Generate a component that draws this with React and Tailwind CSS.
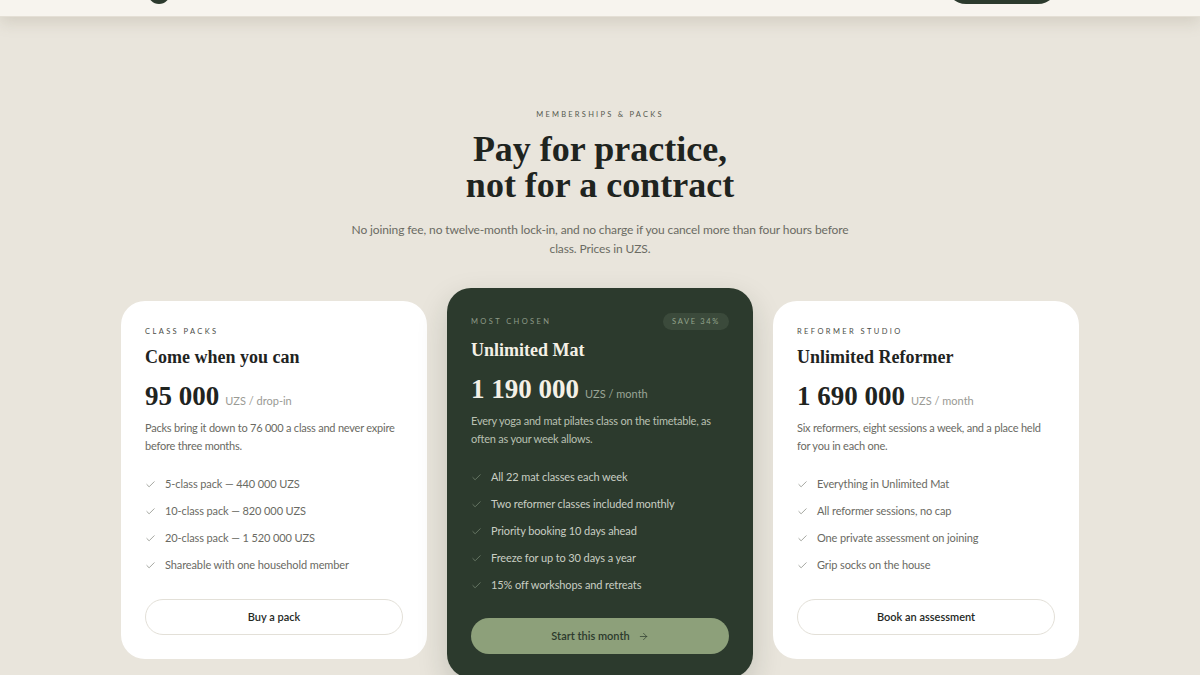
import { Check, ArrowRight } from 'lucide-react';

const sans = "font-['Lato','Open_Sans',sans-serif]";
const serif = "font-['Liberation_Serif','DejaVu_Serif',serif]";

const plans = [
  {
    label: 'Class packs',
    title: 'Come when you can',
    price: '95 000',
    unit: 'UZS / drop-in',
    desc: 'Packs bring it down to 76 000 a class and never expire before three months.',
    items: ['5-class pack — 440 000 UZS', '10-class pack — 820 000 UZS', '20-class pack — 1 520 000 UZS', 'Shareable with one household member'],
    cta: 'Buy a pack',
  },
  {
    label: 'Most chosen',
    title: 'Unlimited Mat',
    price: '1 190 000',
    unit: 'UZS / month',
    desc: 'Every yoga and mat pilates class on the timetable, as often as your week allows.',
    items: ['All 22 mat classes each week', 'Two reformer classes included monthly', 'Priority booking 10 days ahead', 'Freeze for up to 30 days a year', '15% off workshops and retreats'],
    cta: 'Start this month',
    featured: true,
  },
  {
    label: 'Reformer studio',
    title: 'Unlimited Reformer',
    price: '1 690 000',
    unit: 'UZS / month',
    desc: 'Six reformers, eight sessions a week, and a place held for you in each one.',
    items: ['Everything in Unlimited Mat', 'All reformer sessions, no cap', 'One private assessment on joining', 'Grip socks on the house'],
    cta: 'Book an assessment',
  },
];

function PlanCard({ plan }) {
  const dark = plan.featured;
  return (
    <div
      className={
        dark
          ? 'bg-[#2c3a2d] rounded-[24px] px-6 pt-[25px] pb-6 -mt-[13px] mb-[-40px] shadow-[0_12px_30px_rgba(30,40,30,0.18)]'
          : 'bg-white rounded-[24px] px-6 pt-[22px] pb-6'
      }
    >
      <div className="flex items-center justify-between h-[17px]">
        <span className={`text-[7.5px] uppercase tracking-[0.32em] ${dark ? 'text-[#8e9b88]' : 'text-[#4a4d47]'}`}>
          {plan.label}
        </span>
        {dark && (
          <span className="rounded-full bg-[#3b4a3b] px-[9px] h-[17px] flex items-center text-[7.5px] uppercase tracking-[0.22em] text-[#93a38c]">
            Save 34%
          </span>
        )}
      </div>
      <h3 className={`${serif} font-bold text-[18px] leading-[22px] ${dark ? 'text-[#f4f0e6] mt-[9px]' : 'text-[#1f241f] mt-[6px]'}`}>
        {plan.title}
      </h3>
      <div className="flex items-baseline gap-[6px] mt-[13px]">
        <span className={`${serif} font-semibold text-[27px] leading-[30px] ${dark ? 'text-[#f4f0e6]' : 'text-[#1f241f]'}`}>
          {plan.price}
        </span>
        <span className={`text-[11px] ${dark ? 'text-[#9aa596]' : 'text-[#9a9a94]'}`}>{plan.unit}</span>
      </div>
      <p className={`text-[11px] leading-[18px] mt-[8px] tracking-[-0.02em] ${dark ? 'text-[#b9c0b2]' : 'text-[#6a6a63]'}`}>
        {plan.desc}
      </p>
      <ul className="mt-[20px] flex flex-col gap-[9px]">
        {plan.items.map((item) => (
          <li key={item} className={`flex items-center gap-[9px] text-[11px] leading-[18px] tracking-[-0.01em] ${dark ? 'text-[#c9cec3]' : 'text-[#6a6a63]'}`}>
            <Check className={`w-[11px] h-[11px] ${dark ? 'text-[#7f8f7b]' : 'text-[#7a7d75]'}`} strokeWidth={1.5} />
            {item}
          </li>
        ))}
      </ul>
      {dark ? (
        <button className="mt-[24px] w-full h-[36px] rounded-full bg-[#8da07a] text-[#2c3a2d] text-[11px] font-semibold flex items-center justify-center gap-[8px]">
          {plan.cta}
          <ArrowRight className="w-[11px] h-[11px]" strokeWidth={1.5} />
        </button>
      ) : (
        <button className="mt-[25px] w-full h-[36px] rounded-full border border-[#e3e0d8] bg-white text-[#25291f] text-[11px] font-semibold">
          {plan.cta}
        </button>
      )}
    </div>
  );
}

export default function App() {
  return (
    <div className={`${sans} min-h-screen h-[675px] overflow-hidden bg-[#e9e5dc]`}>
      {/* header, scrolled mostly out of view */}
      <header className="h-[64px] -mt-[47px] bg-[#f7f4ee] border-b border-[#e4dfd5] shadow-[0_6px_14px_rgba(120,110,90,0.18)] relative z-10">
        <div className="max-w-[960px] mx-auto h-full flex items-end justify-between pl-[28px] pr-[22px] pb-[12px]">
          <div className="w-[22px] h-[22px] rounded-full bg-[#2c3a2d]" />
          <div className="w-[112px] h-[40px] rounded-full bg-[#2c3a2d]" />
        </div>
      </header>

      <section className="pt-[92px]">
        <div className="text-center">
          <p className="text-[7.5px] uppercase tracking-[0.3em] text-[#55594f]">Memberships &amp; Packs</p>
          <h2 className={`${serif} font-semibold text-[36px] leading-[36px] text-[#1f241f] mt-[11px]`}>
            Pay for practice,
            <br />
            not for a contract
          </h2>
          <p className="mt-[17px] max-w-[520px] mx-auto text-[12px] leading-[19px] text-[#6b6b63] tracking-[-0.01em]">
            No joining fee, no twelve-month lock-in, and no charge if you cancel more than four hours before class. Prices in UZS.
          </p>
        </div>

        <div className="max-w-[958px] mx-auto mt-[43px] grid grid-cols-3 gap-[20px] items-start">
          {plans.map((p) => (
            <PlanCard key={p.title} plan={p} />
          ))}
        </div>
      </section>
    </div>
  );
}
